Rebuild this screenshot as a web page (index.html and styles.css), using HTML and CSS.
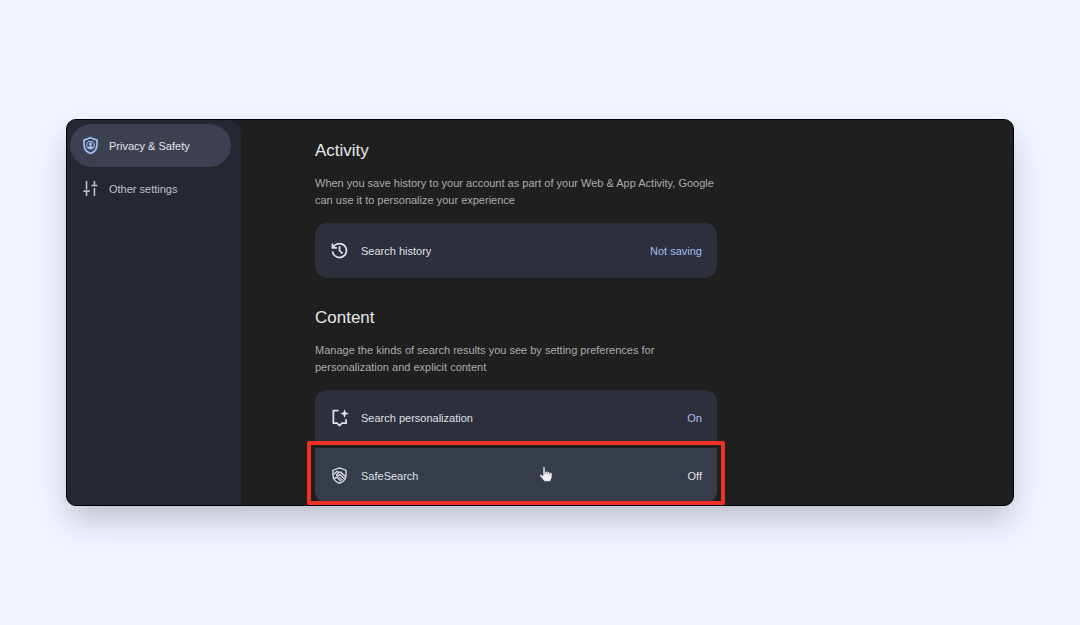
FILE: index.html
```html
<!DOCTYPE html>
<html lang="en">
<head>
    <meta charset="UTF-8">
    <meta name="viewport" content="width=device-width, initial-scale=1.0">
    <title>Search Settings</title>
    <link rel="stylesheet" href="styles.css">
</head>
<body>
    <div class="window">
        <nav class="sidebar">
            <a href="#privacy" class="nav-item active">
                <svg class="icon" viewBox="0 0 24 24" fill="none" stroke="currentColor" stroke-width="2">
                    <path d="M12 3.1 19.4 5.8V11.2C19.4 15.9 16.3 19.6 12 21 7.7 19.6 4.6 15.9 4.6 11.2V5.8Z"/>
                    <circle cx="12" cy="11.6" r="4.4" stroke-width="1.3"/>
                    <circle cx="12" cy="10.3" r="1.9" fill="currentColor" stroke="none"/>
                    <path d="M8.6 14.2C10.6 12.2 13.4 12.2 15.4 14.2 13.4 16.4 10.6 16.4 8.6 14.2Z" fill="currentColor" stroke="none"/>
                </svg>
                <span>Privacy &amp; Safety</span>
            </a>
            <a href="#other" class="nav-item">
                <svg class="icon" viewBox="0 0 24 24" fill="none" stroke="currentColor" stroke-width="1.8">
                    <path d="M7.5 3.5V13M4 15H11M7.5 15V20.5M16.5 3.5V8M13 8.5H20M16.5 11V20.5"/>
                </svg>
                <span>Other settings</span>
            </a>
        </nav>

        <main class="content">
            <section class="group" id="privacy">
                <h2>Activity</h2>
                <p>When you save history to your account as part of your Web &amp; App Activity, Google can use it to personalize your experience</p>
                <div class="cards">
                    <button type="button" class="card">
                        <svg class="icon" viewBox="0 0 24 24" fill="currentColor">
                            <path d="M12 21q-3.45 0-6.012-2.287T3.05 13H5.1q.35 2.6 2.313 4.3T12 19q2.925 0 4.963-2.037T19 12t-2.037-4.962T12 5q-1.725 0-3.225.8T6.25 8H9v2H3V4h2v2.35q1.275-1.6 3.113-2.475T12 3q1.875 0 3.513.713t2.85 1.924 1.925 2.85T21 12t-.712 3.513-1.925 2.85-2.85 1.925T12 21m2.8-4.8L11 12.4V7h2v4.6l3.2 3.2z"/>
                        </svg>
                        <span class="label">Search history</span>
                        <span class="value">Not saving</span>
                    </button>
                </div>
            </section>

            <section class="group" id="other">
                <h2>Content</h2>
                <p>Manage the kinds of search results you see by setting preferences for personalization and explicit content</p>
                <div class="cards">
                    <button type="button" class="card">
                        <svg class="icon" viewBox="0 0 24 24" fill="none" stroke="currentColor" stroke-width="2">
                            <path d="M11 4H5V18.5H9.2L12 21.2 14.8 18.5H19.5V14"/>
                            <path d="M17.8 2.5 19.2 6.2 22.8 7.5 19.2 8.8 17.8 12.5 16.4 8.8 12.8 7.5 16.4 6.2Z" fill="currentColor" stroke="none"/>
                        </svg>
                        <span class="label">Search personalization</span>
                        <span class="value">On</span>
                    </button>
                    <button type="button" class="card hovered">
                        <svg class="icon" viewBox="0 0 24 24" fill="none" stroke="currentColor" stroke-width="1.5" stroke-linejoin="round">
                            <path d="M12 3.2 19.5 6V11.2C19.5 15.8 16.4 19.4 12 20.9 7.6 19.4 4.5 15.8 4.5 11.2V6Z"/>
                            <path d="M5 11 8.3 7.9Q9.3 7 10.4 8M19 13.5 13.6 8.4Q12.6 7.5 11.6 8.4L8.6 11.1Q9 13.2 11 12.2L12.6 10.9 17.6 15.7M6.3 15.6 8.8 13.8 13.8 18.6"/>
                            <path d="M11.6 13.9 15.4 17.4" stroke-width="1.2"/>
                        </svg>
                        <span class="label">SafeSearch</span>
                        <span class="value">Off</span>
                        <span class="highlight"></span>
                        <svg class="pointer" viewBox="0 0 14 18">
                            <path d="M4 2.2Q5 .8 6 2.2V6.4L7.8 6.2 8.4 6.8 10 6.7 10.6 7.4 11.8 7.4 13 8.6V12.2L11.4 16.4H5.4L1 11.2Q.4 9.8 1.6 9.2L4 10.6Z" fill="#f0f0f2" stroke="#2a2d37" stroke-width="0.6"/>
                            <path d="M6 6.5V9M8.3 6.8V9.2M10.6 7.4V9.6" stroke="#2a2d37" stroke-width="0.5"/>
                        </svg>
                    </button>
                </div>
            </section>
        </main>
    </div>
</body>
</html>
```
FILE: styles.css
```css
* {
    box-sizing: border-box;
}

body {
    font-family: "Liberation Sans", Arial, sans-serif;
    font-size: 11px;
    background-color: #f0f4ff;
    margin: 0;
    padding: 0 66px;
    display: flex;
    align-items: center;
    min-height: 100vh;
}

.window {
    flex: 1;
    display: flex;
    background-color: #1f1f1f;
    border: 1px solid #000;
    border-radius: 10px;
    overflow: hidden;
    box-shadow: 0 16px 32px -4px rgba(30, 25, 40, 0.26);
}

/* Sidebar */
.sidebar {
    width: 174px;
    flex-shrink: 0;
    padding: 4px 10px 4px 3px;
    background-color: #252831;
    border-top-right-radius: 12px;
}

.nav-item {
    display: flex;
    align-items: center;
    gap: 8px;
    height: 43px;
    padding: 0 10px;
    border-radius: 22px;
    color: #c0c2c8;
    text-decoration: none;
}

.nav-item.active {
    background-color: #3d4050;
    color: #e4e6ee;
}

.nav-item.active .icon {
    color: #9dbdf0;
}

.icon {
    width: 21px;
    height: 21px;
    flex-shrink: 0;
}

/* Settings */
.content {
    flex: 1;
    padding: 20px 74px 2px;
}

.group {
    max-width: 402px;
}

.group + .group {
    margin-top: 29px;
}

h2 {
    margin: 0 0 13px;
    font-size: 17px;
    font-weight: normal;
    line-height: 22px;
    color: #e6e7ea;
}

p {
    margin: 0 0 14px;
    line-height: 17px;
    color: #acacad;
}

.cards {
    display: flex;
    flex-direction: column;
    gap: 3px;
}

.card {
    position: relative;
    display: flex;
    align-items: center;
    gap: 11px;
    height: 55px;
    padding: 0 15px 0 14px;
    border: none;
    border-radius: 2px;
    background-color: #2d2f3c;
    color: #dfe1e6;
    font: inherit;
    text-align: left;
    cursor: pointer;
}

.card:first-child {
    border-top-left-radius: 12px;
    border-top-right-radius: 12px;
}

.card:last-child {
    border-bottom-left-radius: 12px;
    border-bottom-right-radius: 12px;
}

.label {
    flex: 1;
}

.value {
    color: #a4bff0;
}

.hovered {
    background-color: #373c4a;
}

.hovered .value {
    color: #dfe1e6;
}

/* Red frame around the SafeSearch row */
.highlight {
    position: absolute;
    inset: -7px -8px -2px;
    border: 4px solid #ee3124;
    border-radius: 2px;
}

.pointer {
    position: absolute;
    top: 17px;
    left: 224px;
    width: 14px;
    height: 18px;
}
```
